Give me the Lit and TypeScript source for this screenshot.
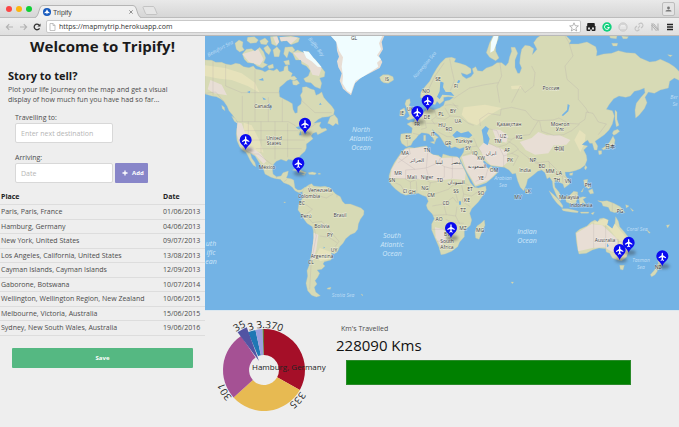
import { LitElement, html, svg, css } from "lit";
import { customElement, state } from "lit/decorators.js";

@customElement("browser-bar")
class BrowserBar extends LitElement {
  static styles = css`
    :host { display: block; font-family: "Liberation Sans", sans-serif; color: #444; }
    .tabs { display: flex; align-items: flex-end; height: 18px; background: linear-gradient(#e9e9e9, #d6d6d6); padding: 0 4px 0 6px; box-sizing: border-box; border-bottom: 1px solid #bcbcbc; }
    .lights { display: flex; gap: 4px; align-self: center; margin-right: 3px; }
    .lights button { width: 6px; height: 6px; border: 0; padding: 0; border-radius: 50%; }
    .red { background: #fb4646; } .amber { background: #fdb50f; } .green { background: #0fcf35; }
    .tabshape { display: block; height: 13px; width: 8px; margin-bottom: -1px; }
    .tab { display: flex; align-items: center; height: 13px; width: 90px; background: #f0f0f0; border-top: 1px solid #b5b5b5; box-sizing: border-box; margin-bottom: -1px; font-size: 7px; gap: 2px; }
    .tab span { flex: 1; }
    .tab button { border: 0; background: none; padding: 0; display: flex; }
    .newtab { display: flex; border: 0; background: none; padding: 0; align-self: center; margin: 4px 0 0 1px; }
    .user { display: flex; align-self: center; margin-left: auto; border: 1px solid #bdbdbd; border-radius: 2px; background: #e4e4e4; padding: 2px; }
    .tools { display: flex; align-items: center; height: 18px; box-sizing: border-box; background: linear-gradient(#efefef, #dfdfdf); border-bottom: 1px solid #b9b9b9; padding: 0 5px; gap: 5px; }
    .tools button { border: 0; padding: 0; background: none; display: flex; }
    .address { flex: 1; display: flex; align-items: center; height: 13px; box-sizing: border-box; border: 1px solid #c9c9c9; border-radius: 2px; background: #fff; padding: 0 1px 0 2px; gap: 3px; }
    .address input { flex: 1; min-width: 0; border: 0; outline: 0; padding: 0; font: 7px "Open Sans", sans-serif; color: #333; background: none; }
    .ext { display: flex; gap: 6px; }
    svg { display: block; }
  `;
  render() {
    return html`
      <div class="tabs">
        <div class="lights"><button class="red" aria-label="Close window"></button><button class="amber" aria-label="Minimise"></button><button class="green" aria-label="Zoom"></button></div>
        <svg class="tabshape" viewBox="0 0 8 13"><path d="M0 13 Q2 12 3 9 L5 3 Q6 .5 8 .5 V13Z" fill="#f0f0f0"/><path d="M0 12.5 Q2 12 3 9 L5 3 Q6 .5 8 .5" fill="none" stroke="#b5b5b5"/></svg>
        <div class="tab">
          <svg width="8" height="8" viewBox="0 0 24 24"><circle cx="12" cy="12" r="12" fill="#1559bd"/><path d="M12 4l3 6 5 4v2l-6-1-2 5-2-5-6 1v-2l5-4z" fill="#fff"/></svg>
          <span>Tripify</span>
          <button aria-label="Close tab"><svg width="4" height="4" viewBox="0 0 4 4"><path d="M.3.3l3.4 3.4M3.7.3L.3 3.7" stroke="#777" stroke-width=".8"/></svg></button>
        </div>
        <svg class="tabshape" viewBox="0 0 8 13"><path d="M8 13 Q6 12 5 9 L3 3 Q2 .5 0 .5 V13Z" fill="#f0f0f0"/><path d="M8 12.5 Q6 12 5 9 L3 3 Q2 .5 0 .5" fill="none" stroke="#b5b5b5"/></svg>
        <button class="newtab" aria-label="New tab"><svg width="16" height="9" viewBox="0 0 16 9"><path d="M2 .5h9q1 0 1.500 1l2.500 6q0 1-1 1H5q-1 0-1.500-1L1 1.500Q1 .5 2 .5z" fill="#e6e6e6" stroke="#bbb" stroke-width=".8"/></svg></button>
        <button class="user" aria-label="Profile"><svg width="7" height="8" viewBox="0 0 7 8"><circle cx="3.500" cy="3" r="1.400" fill="#777"/><path d="M.5 6.500q0-1.800 3-1.800t3 1.800z" fill="#777"/></svg></button>
      </div>
      <div class="tools">
        <button aria-label="Back"><svg width="9" height="8" viewBox="0 0 9 8"><path d="M8 4H1.500M4.200 1.200L1.400 4l2.800 2.800" fill="none" stroke="#b3b3b3" stroke-width="1.200"/></svg></button>
        <button aria-label="Forward"><svg width="9" height="8" viewBox="0 0 9 8"><path d="M1 4h6.500M4.800 1.200L7.600 4 4.800 6.800" fill="none" stroke="#b3b3b3" stroke-width="1.200"/></svg></button>
        <button aria-label="Reload"><svg width="8" height="8" viewBox="0 0 8 8"><path d="M6.500 5.200A2.800 2.800 0 1 1 6 2" fill="none" stroke="#333" stroke-width="1.300"/><path d="M7.500.5v3.100H4.400z" fill="#333"/></svg></button>
        <div class="address">
          <svg width="7" height="8" viewBox="0 0 7 8"><path d="M1 .5h3.200L6 2.400v5.100H1zM4 .5v2h2" fill="none" stroke="#aaa" stroke-width=".7"/></svg>
          <input aria-label="Address" value="https://mapmytrip.herokuapp.com" />
          <button aria-label="Bookmark"><svg width="10" height="10" viewBox="0 0 10 10"><path d="M5 .8l1.200 2.900 3.200.2-2.500 2 .8 3.100L5 7.300 2.300 9l.8-3.100-2.500-2 3.200-.2z" fill="none" stroke="#999" stroke-width=".7"/></svg></button>
        </div>
        <div class="ext">
          <button aria-label="Extension"><svg width="10" height="10" viewBox="0 0 10 10"><path d="M2 1h6q.8 0 .8 1v2.500H1.200V2q0-1 .8-1zM.5 4h9v4q0 1-1 1H5.800V7.500H4.200V9H1.500q-1 0-1-1z" fill="#222"/><rect x="2" y="5.500" width="2" height="2" fill="#ddd"/><rect x="6" y="5.500" width="2" height="2" fill="#ddd"/></svg></button>
          <button aria-label="Grammar"><svg width="10" height="10" viewBox="0 0 10 10"><circle cx="5" cy="5" r="4.700" fill="#12d17e"/><path d="M7 3.400A2.500 2.500 0 1 0 7.400 5.500H5.400" fill="none" stroke="#fff"/></svg></button>
          <button aria-label="Mail"><svg width="10" height="10" viewBox="0 0 10 10"><circle cx="5" cy="5" r="4.300" fill="#d5d5d5" stroke="#c4c4c4" stroke-width=".6"/><path d="M3 7V3.800h4V7M5 3.800V7" fill="none" stroke="#f5f5f5"/></svg></button>
          <button aria-label="Link"><svg width="10" height="10" viewBox="0 0 10 10"><path d="M4.500 2.500Q7 0 8.500 2T7 6M5.500 7.500Q3 10 1.500 8T3 4M4 6.500l2-3" fill="none" stroke="#c3c3c3" stroke-width="1.100"/></svg></button>
          <button aria-label="Network"><svg width="10" height="10" viewBox="0 0 10 10"><path d="M2 8.500v-7l6 7v-7M3.500 1.500l5 6M1.500 3l5 6" fill="none" stroke="#aaa" stroke-width=".9"/></svg></button>
          <button aria-label="Menu"><svg width="8" height="10" viewBox="0 0 8 10"><path d="M1 2.500h6M1 5h6M1 7.500h6" stroke="#222" stroke-width="1.300"/></svg></button>
        </div>
      </div>`;
  }
}

// Outlines are drawn on a grid three times finer than the label grid.
const LAND = [
  // North and Central America
  "M0 72L20 73 32 79 50 79 62 84 78 87 92 82 104 84 116 92 132 95 145 90 152 99 170 103 180 108 192 101 206 104 216 98 224 108 236 104 238 92 248 88 250 104 262 112 258 122 268 120 276 128 266 134 256 130 246 134 236 144 224 154 222 166 224 182 238 190 250 196 262 203 264 220 270 232 277 230 278 212 288 204 290 190 286 178 292 168 292 154 304 152 316 158 328 162 333 178 342 174 350 168 356 184 366 196 380 210 388 222 386 236 370 242 352 244 340 250 326 262 336 260 348 258 343 270 350 278 362 277 366 282 350 290 338 296 334 288 324 292 318 300 324 308 312 318 304 324 304 336 300 346 288 356 282 364 284 378 288 392 283 398 276 390 272 376 262 372 250 370 244 376 228 370 214 376 206 384 202 398 204 414 214 422 228 420 234 410 250 405 248 416 244 426 258 428 266 432 268 444 270 456 278 462 288 462 300 454 308 462 296 466 282 470 270 464 262 454 252 446 236 440 226 430 212 428 198 424 180 414 176 402 170 392 160 376 150 360 136 352 140 366 150 380 153 392 145 388 136 374 128 358 122 348 112 342 104 332 96 314 94 294 96 274 98 258 90 248 82 236 72 224 66 210 56 196 46 188 34 182 20 180 8 176 0 174Z",
  // Arctic archipelago
  "M90 22L102 12 114 18 112 32 118 42 104 48 94 40ZM112 54L124 40 140 38 150 46 164 34 176 48 182 66 176 80 188 86 172 96 156 90 146 82 128 80 118 70ZM128 4L148 2 160 12 154 20 136 22 126 14ZM164 14L180 6 190 16 184 26 168 24ZM176 36L188 28 198 42 192 56 182 48ZM196 2L216 0 222 18 214 30 200 24ZM204 42L216 32 226 44 222 62 208 62ZM224 4L258 0 284 6 280 18 258 26 246 14 228 16ZM240 34L262 32 270 42 262 52 252 46 246 66 236 54ZM262 50L278 42 296 50 310 46 318 62 330 70 344 88 360 108 358 122 344 126 350 142 346 158 330 152 318 140 302 138 296 128 310 120 316 104 304 90 290 84 288 72 272 72ZM262 136L276 132 284 142 274 148 264 146ZM236 76L252 72 254 86 242 86ZM188 90L204 84 206 96 192 98Z",
  "M50 208L58 214 60 224 52 218ZM80 240L92 248 98 262 88 256ZM376 242L388 236 398 248 400 266 392 262 384 270 374 264 368 262Z",
  // Caribbean
  "M262 402L276 397 290 404 304 410 300 413 286 408 272 404ZM310 410L322 408 334 411 330 416 312 415ZM290 415L300 415 298 418ZM340 412L346 412 346 415 340 415Z",
  // South America
  "M298 456L312 446 320 443 326 450 346 452 360 451 376 456 384 466 392 474 406 482 412 496 420 504 436 504 452 510 468 516 477 524 476 536 466 550 460 564 458 580 450 590 436 596 422 608 414 622 404 632 398 646 388 654 378 650 382 662 378 672 358 677 354 684 360 690 350 700 336 702 344 712 338 724 330 734 336 744 328 754 332 768 346 779 334 783 320 778 308 764 303 742 308 720 306 704 314 684 318 660 322 638 326 606 325 584 322 572 306 562 296 548 288 534 279 522 281 506 288 494 294 484 292 468Z",
  "M368 756L378 754 376 760 366 759ZM468 774L474 777 472 779Z",
  // Europe and Asia
  "M646 184L648 168 660 152 674 136 684 116 696 96 706 82 722 66 740 64 752 68 748 78 764 82 782 88 798 98 798 110 786 116 768 110 772 120 784 128 798 122 806 112 802 98 812 92 818 104 832 106 844 96 862 90 876 80 890 80 902 90 910 80 914 62 920 46 918 34 930 34 938 52 930 72 930 94 938 112 944 112 950 96 944 82 946 60 950 40 960 28 974 30 986 38 982 56 996 40 986 20 996 6 1010 -4 1080 -4 1098 14 1092 24 1120 24 1146 18 1172 32 1176 46 1174 60 1196 54 1220 52 1240 44 1264 50 1290 52 1306 66 1334 78 1352 76 1366 70 1392 82 1408 92 1426 110 1424 134 1408 126 1394 136 1390 156 1366 162 1348 172 1330 168 1320 184 1326 200 1318 218 1302 238 1292 246 1290 222 1294 202 1308 184 1320 170 1318 156 1304 162 1288 166 1276 180 1262 184 1242 180 1226 188 1212 206 1204 220 1222 224 1228 240 1222 264 1212 282 1198 296 1184 306 1170 316 1178 330 1176 342 1168 342 1162 322 1154 322 1148 312 1136 320 1130 326 1148 330 1136 342 1144 358 1146 372 1140 388 1126 398 1110 404 1094 408 1080 408 1082 420 1092 432 1094 444 1078 456 1074 444 1062 438 1054 432 1048 440 1050 454 1062 468 1070 486 1066 494 1056 482 1050 468 1044 454 1042 436 1034 424 1026 428 1020 410 1010 402 998 406 984 418 968 430 964 446 956 464 946 454 938 434 932 412 922 414 912 402 898 394 878 392 860 390 846 382 836 372 834 378 844 392 850 398 858 390 866 400 878 410 864 424 844 440 818 450 810 452 800 434 788 414 774 388 764 366 770 358 776 348 778 334 764 338 750 332 738 336 732 322 730 334 720 326 710 310 702 298 690 288 682 280 686 294 700 304 694 308 690 318 684 306 672 294 664 292 650 290 640 298 634 306 624 316 618 328 604 332 590 322 586 310 588 294 604 292 620 292 622 276 606 264 618 258 628 258 630 250 646 240 656 228 664 222 660 208 668 202 674 218 686 222 704 216 716 208 720 196 734 192 746 184 730 182 716 184 716 194 704 204 696 196 690 206 684 204 678 190 668 180 656 190Z",
  // Islands of the Atlantic
  "M524 124L534 116 550 116 564 122 566 132 550 142 536 140 528 134ZM604 192L614 188 616 200 612 208 624 222 634 238 630 246 610 252 604 248 614 240 610 230 606 218 600 204ZM586 222L598 216 602 230 596 240 584 240ZM676 318L690 316 688 324ZM656 298L662 298 662 314 656 314Z",
  "M844 50L854 20 864 0 880 0 880 8 872 28 872 46 882 66 872 74 854 64Z",
  "M1214 0L1236 0 1234 8 1216 6ZM1220 22L1238 22 1236 30 1224 30ZM1250 0L1270 2 1266 8 1254 8ZM1388 56L1402 58 1396 62ZM1230 222L1236 228 1236 250 1242 268 1234 272 1230 250ZM1226 284L1238 280 1244 286 1234 294 1226 298 1222 292ZM1224 300L1230 312 1228 326 1212 334 1196 342 1190 338 1206 328 1214 318ZM1180 344L1190 344 1190 354 1182 356ZM1142 388L1146 394 1142 402 1138 396ZM1094 412L1104 410 1102 418 1094 418Z",
  // Africa
  "M600 338L612 334 628 336 648 332 666 330 670 346 684 356 700 358 710 366 714 354 734 360 756 362 764 368 766 378 778 400 786 418 796 440 808 454 820 456 842 450 844 462 834 478 820 498 800 518 794 532 800 552 796 568 778 584 778 602 764 618 758 632 740 646 720 654 708 656 702 634 690 606 680 582 680 564 688 548 682 534 668 520 664 508 670 496 664 482 652 478 640 472 620 474 602 478 588 472 572 460 560 448 554 438 552 420 558 400 568 380 580 362 588 350Z",
  "M838 552L840 568 830 590 822 610 812 606 810 588 816 570 828 562Z",
  // South-east Asia and Oceania
  "M1032 464L1046 476 1062 492 1074 510 1072 516 1056 502 1044 486ZM1070 518L1088 518 1106 522 1120 526 1118 530 1096 528 1074 524ZM1080 482L1092 480 1106 466 1118 468 1118 484 1112 502 1098 504 1084 498ZM1122 486L1134 482 1144 484 1134 490 1142 504 1132 500 1130 510 1124 502ZM1178 494L1192 496 1206 494 1226 502 1246 512 1260 530 1244 524 1230 530 1216 526 1210 514 1194 510 1190 500ZM1136 432L1148 430 1146 446 1156 454 1150 458 1138 448ZM1150 464L1162 458 1166 472 1156 474ZM1136 456L1128 468 1132 468ZM1126 528L1152 528 1150 532 1128 532ZM1158 532L1168 528 1164 536ZM1262 506L1272 510 1264 516ZM1276 516L1286 524 1282 526ZM960 458L970 462 970 474 962 470Z",
  "M1112 590L1124 580 1146 570 1158 558 1170 552 1178 558 1184 548 1196 546 1210 552 1206 566 1222 578 1230 562 1232 542 1240 556 1244 572 1258 588 1270 604 1276 622 1270 646 1264 664 1250 674 1238 672 1222 666 1214 652 1204 648 1202 638 1182 636 1162 642 1144 652 1122 654 1118 640 1114 614ZM1244 688L1258 688 1254 702 1246 700ZM1356 662L1366 672 1378 680 1370 690 1360 702 1352 696 1360 682ZM1352 698L1358 704 1350 716 1340 722 1336 716ZM1384 568L1394 566 1388 576ZM1324 580L1336 590 1332 592ZM918 738L926 738 922 743ZM236 498L242 498 239 501Z",
];

const ARID = [
  "M90 258L110 262 124 300 136 332 166 352 184 376 176 384 150 356 128 346 104 324 96 296Z",
  "M600 340L664 332 672 350 712 366 760 364 782 412 780 432 740 428 700 434 640 430 556 426 560 400 580 366Z",
  "M770 362L804 354 836 376 850 398 874 410 852 432 812 448 784 402Z",
  "M836 320L860 326 884 336 906 346 906 380 892 392 856 386 836 362 822 336Z",
  "M944 318L980 306 1000 288 1026 298 1064 298 1096 312 1084 326 1046 328 1030 352 990 356 962 342Z",
  "M862 280L886 282 910 300 904 320 874 312Z",
  "M1114 592L1160 564 1192 568 1214 588 1236 608 1240 640 1222 648 1198 634 1162 636 1120 646Z",
  "M326 590L340 596 334 640 322 680 320 636Z",
  "M690 574L716 580 724 610 708 632 692 604Z",
  "M264 50L310 48 350 96 342 120 322 116 310 88 284 72ZM112 54L160 40 176 70 164 88 132 78ZM204 2L280 4 258 24 214 26ZM16 132L50 146 66 178 28 172 8 160Z",
];

const FERTILE = [
  "M0 88L60 96 110 112 150 140 164 170 128 150 80 132 44 128 0 120Z",
  "M776 214L840 206 890 216 850 240 816 268 790 258 770 236Z",
  "M344 636L378 648 376 668 346 676 332 660Z",
  "M1158 562L1200 548 1232 566 1270 612 1268 660 1240 672 1242 616 1206 570Z",
  "M116 260L140 268 162 310 176 350 146 344 118 312Z",
  "M918 150L950 148 948 158 920 160ZM1126 348L1108 312 1124 282 1142 296 1138 324Z",
];

const WATER = [
  "M742 298L756 284 768 292 790 286 802 298 792 306 766 302 750 306ZM830 282L842 270 852 278 846 292 854 308 848 328 836 320 834 302ZM706 136L716 140 714 154 722 168 738 168 748 180 732 178 712 176 704 190 696 182 704 166ZM1088 204L1094 208 1090 226 1074 240 1070 238 1086 222ZM762 496L768 496 768 506 762 506Z",
  "M272 274L286 270 292 280 280 280ZM286 284L290 298 282 298ZM296 286L308 290 300 296ZM126 168L136 164 134 172ZM160 132L174 126 176 134ZM194 202L200 216 196 222 190 208ZM172 184L184 190 176 192ZM346 200L350 206 342 206ZM356 632L360 634 356 638ZM1206 622L1212 630 1206 634ZM760 132L766 134 762 142 756 140Z",
];

const BORDERS =
  "M24 76V178M0 172L32 168 60 200M98 257H250L270 268 290 290 320 272 334 262M112 180V257M150 100V257M190 184V257M232 190V257M62 86V150L110 170H222M124 346L144 354H160L188 376 204 388M130 257V310M168 257V350M210 257V370M248 262V364M118 284H280M126 312H300M152 338H290M292 270L320 300M286 190L330 230H380M212 428L222 416M236 438L246 430M312 448L318 466 336 474 340 490M286 500L306 508 322 520 302 536 322 560M336 478L364 486 384 474M322 560L350 556 376 586 388 600 402 616 390 632M326 572L334 600 326 640 318 690 314 760M344 600L372 604 396 620M384 640L398 646M396 474V484M656 190L668 166 690 120 718 80M690 120L708 138M734 68L740 100 748 134 736 164M624 292L642 296M608 332L606 300M648 240L660 256 664 276 648 280M688 222L694 242 680 252 690 266M664 262H704M694 246L720 250 736 240M700 268L720 276 736 292M700 288L726 302 740 302M720 208L736 206 760 210M720 216L734 240 764 242 790 262 806 268M742 200L760 220M746 188L760 178 794 156 840 146 880 140M884 76L890 120 876 150 884 200M920 200L946 150 960 170 986 150 990 110 980 90M1080 0L1092 20 1104 60 1080 90 1086 130 1120 160 1120 190 1142 216 1150 230M824 250L850 232 886 238 888 220 920 214 962 224 984 250 1000 254M824 250L826 270M850 278L876 284 884 304 920 310 940 300 974 296 1000 254 1044 252 1062 246 1090 262 1120 264 1140 250 1144 228 1164 232 1180 258 1204 264 1180 296M1004 256L1010 286 1046 298 1076 296 1100 284 1124 264M850 320L876 334 904 326 920 312M910 316L932 330 940 340M884 336L896 360 920 352 940 340M896 360V392M920 352L940 360 924 390M940 342L970 366 1000 380 1030 376 1050 396M970 366L976 374 1000 384M1000 380L1008 402M1032 376L1036 410M1050 396L1064 410 1086 428M1040 404L1052 414 1072 420 1074 440M780 336L816 330 830 350M796 332L800 350 824 366M806 306L816 330M774 358L800 350M812 436L842 424 848 400M592 350L576 366M612 336L616 354 580 380M580 366L630 400 664 396 668 350M630 400L602 402V428H560M664 396L700 380 706 366M700 380L718 392 742 398V362M742 398H778M742 398V426M718 392L718 424M664 398L670 420 662 430M600 428L616 438 640 428M570 440L588 448 600 472M616 438L618 474M634 436L636 472M660 430L676 440 670 470M676 440L700 436 716 424M740 428L744 448 730 460 700 470 670 480M744 448L776 440 792 448M770 448L776 474 800 480 820 466M752 472L760 500M776 474L772 496 796 512M682 510L716 504 744 484 756 500M716 504L724 536 684 538M724 536L752 540 756 512M752 540L764 564M682 580H720L744 560 776 562M720 580L730 600 756 590M696 616L724 614 748 596M722 550L744 560M1166 560V636M1202 568V640M1202 610H1240V640M1240 616L1270 620M1222 648L1260 660M1222 500V526M1082 482L1102 486 1116 470";

const COUNTRIES: [string, number, number][] = [
  ["GL", 149, 4], ["IS", 182, 45], ["Canada", 58, 72], ["United", 69, 104], ["States", 69, 109], ["México", 62, 133],
  ["SE", 233, 45], ["NO", 221, 57], ["DE", 222, 83], ["PL", 236, 80], ["ES", 203, 103], ["FR", 212, 90], ["UK", 205, 75], ["IE", 197, 79], ["IT", 228, 100],
  ["HU", 237, 91], ["MA", 200, 119], ["TN", 222, 116], ["الجزائر", 212, 126], ["ليبيا", 234, 128], ["FI", 251, 52], ["BY", 248, 77],
  ["UA", 253, 87], ["RO", 244, 95], ["GR", 243, 109], ["Türkiye", 259, 107], ["SY", 263, 114], ["IQ", 270, 119], ["KW", 276, 124], ["ایران", 286, 119],
  ["مصر", 251, 128], ["السعودية", 272, 132], ["OM", 289, 136], ["AF", 302, 116], ["PK", 305, 126], ["UZ", 298, 102], ["TM", 293, 107], ["KG", 314, 103],
  ["Россия", 346, 54], ["Қазақстан", 304, 90], ["Монгол", 355, 90], ["Улс", 355, 95], ["中国", 354, 114], ["日本", 405, 112], ["NP", 328, 126], ["BD", 337, 132],
  ["India", 320, 136], ["MM", 345, 137], ["LA", 354, 139], ["TH", 352, 146], ["VN", 363, 147], ["PH", 383, 151], ["LK", 323, 157], ["MV", 313, 163],
  ["Malaysia", 364, 163], ["Indonesia", 376, 171], ["PG", 415, 177], ["Australia", 400, 206], ["NZ", 453, 233],
  ["MR", 193, 139], ["Mali", 207, 143], ["Niger", 222, 143], ["TD", 235, 146], ["SN", 187, 146], ["CI", 200, 157], ["GH", 207, 158], ["NG", 220, 154], ["CM", 226, 161],
  ["السودان", 251, 148], ["SS", 251, 157], ["ET", 265, 155], ["YE", 276, 144], ["SO", 276, 159], ["KE", 262, 166], ["CD", 241, 169], ["TZ", 258, 176], ["AO", 234, 185],
  ["MZ", 258, 194], ["MG", 275, 196], ["BW", 243, 200], ["South", 242, 207], ["Africa", 242, 213],
  ["Venezuela", 115, 156], ["Colombia", 104, 162], ["EC", 97, 169], ["Perú", 101, 182], ["Brasil", 135, 181], ["Bolivia", 117, 192], ["PY", 125, 201], ["UY", 129, 216], ["Argentina", 117, 222], ["CL", 106, 228],
];
const OCEANS: [string, number, number][] = [
  ["North", 156, 96], ["Atlantic", 156, 105], ["Ocean", 156, 114],
  ["South", 187, 202], ["Atlantic", 187, 211], ["Ocean", 187, 220],
  ["Indian", 322, 198], ["Ocean", 322, 207], ["uth", 6, 210], ["ific", 6, 219], ["ean", 6, 228],
];
const SEAS: [string, number, number, number][] = [
  ["Beaufort Sea", 16, 14, -28], ["Baffin Bay", 110, 12, 52], ["Norwegian Sea", 221, 30, -50], ["Scotia Sea", 138, 261, 0],
  ["Arabian", 298, 144, 0], ["Sea", 298, 151, 0], ["Coral Sea", 432, 195, 0], ["Tasman", 436, 226, 0], ["Sea", 436, 233, 0], ["Ber", 469, 63, 0], ["Se", 470, 70, 0],
];
const PINS: [number, number, string][] = [
  [668, 224, "Hamburg"], [637, 258, "Paris"], [300, 293, "New York"], [122, 342, "Los Angeles"], [280, 412, "Cayman Islands"],
  [738, 606, "Gaborone"], [1271, 650, "Sydney"], [1244, 672, "Melbourne"], [1372, 691, "Wellington"],
];

@customElement("trip-map")
class TripMap extends LitElement {
  static styles = css`
    :host { display: block; border-bottom: 1px solid #dce8f0; }
    .map { display: block; width: 100%; height: auto; background: #73b3e5; font-family: "Open Sans", "Noto Sans", "DejaVu Sans", "Noto Sans CJK SC", sans-serif; }
    .land { fill: #d7dab5; stroke: #c3c9ad; stroke-width: 1; }
    .ice { fill: #f0fdff; }
    .arid { fill: #e8ded5; }
    .fertile { fill: #e6e2bb; }
    .water { fill: #73b3e5; }
    .borders { fill: none; stroke: #b3a8ac; stroke-width: 1; stroke-opacity: 0.8; }
    .country { font-size: 5px; fill: #3c3c42; text-anchor: middle; stroke: #fff; stroke-width: 1; stroke-opacity: 0.5; paint-order: stroke; }
    .ocean { font-size: 7px; font-style: italic; fill: #cfe7f9; text-anchor: middle; }
    .sea { font-size: 5px; font-style: italic; fill: #c0dff6; text-anchor: middle; }
    .shadow { fill: #333; fill-opacity: 0.4; filter: blur(4px); }
    .pin { fill: #0a0af0; }
    .plane { fill: #fff; }
  `;
  render() {
    return html`<svg class="map" viewBox="0 0 474 274" role="img" aria-label="Map of visited places">
      <defs><clipPath id="coast">${LAND.map((d) => svg`<path d=${d} />`)}</clipPath></defs>
      <g transform="scale(0.333333)">
        ${LAND.map((d) => svg`<path class="land" d=${d} />`)}
        <g clip-path="url(#coast)">
          ${FERTILE.map((d) => svg`<path class="fertile" d=${d} />`)}
          ${ARID.map((d) => svg`<path class="arid" d=${d} />`)}
          <path class="borders" d=${BORDERS} />
        </g>
        ${WATER.map((d) => svg`<path class="water" d=${d} />`)}
        <path class="arid" d="M378 0L394 18 396 44 402 62 396 76 400 94 410 112 404 134 414 158 428 170 438 178 444 160 450 142 470 124 494 112 524 96 532 78 522 60 534 40 530 18 538 0Z" />
        <path class="ice" d="M378 0L394 18 402 44 414 64 410 92 414 120 412 142 426 164 438 172 444 152 452 134 474 122 500 106 520 92 516 80 528 70 516 58 528 40 522 22 532 0Z" />
        <path class="ice" d="M858 18L866 0 880 0 874 24 866 44 856 50ZM294 44L312 48 326 66 342 84 350 94 338 92 320 76 304 66Z" />
      </g>
      ${COUNTRIES.map(([t, x, y]) => svg`<text class="country" x=${x} y=${y}>${t}</text>`)}
      ${OCEANS.map(([t, x, y]) => svg`<text class="ocean" x=${x} y=${y}>${t}</text>`)}
      ${SEAS.map(([t, x, y, a]) => svg`<text class="sea" x=${x} y=${y} transform="rotate(${a} ${x} ${y})">${t}</text>`)}
      <g transform="scale(0.333333)">
        ${PINS.map(([x, y, name]) => svg`<g transform="translate(${x} ${y})"><title>${name}</title>
          <ellipse class="shadow" cx="4" cy="0" rx="18" ry="8" />
          <path class="pin" d="M0 0C-4 -13 -18 -17 -18 -30A18 18 0 0 1 18 -30C18 -17 4 -13 0 0Z" />
          <path class="plane" d="M0 -41Q2 -41 2 -37V-33L11 -27V-24L2 -27V-21L5 -18V-16L0 -18 -5 -16V-18L-2 -21V-27L-11 -24V-27L-2 -33V-37Q-2 -41 0 -41Z" /></g>`)}
      </g>
    </svg>`;
  }
}

const polar = (r: number, deg: number) => {
  const a = (deg * Math.PI) / 180;
  return `${(Math.sin(a) * r).toFixed(2)} ${(-Math.cos(a) * r).toFixed(2)}`;
};

interface Slice { from: number; to: number; color: string; value: string; }

@customElement("distance-donut")
class DistanceDonut extends LitElement {
  static styles = css`
    :host { display: block; }
    .donut { display: block; width: 118px; height: 104px; overflow: visible; font-family: "Open Sans", sans-serif; }
    .value { font-size: 10px; fill: #222; }
    .place { font-size: 8px; fill: #222; }
  `;
  slices: Slice[] = [
    { from: 0, to: 119, color: "#a50f28", value: "370" },
    { from: 119, to: 228, color: "#e7ba52", value: "335" },
    { from: 228, to: 326, color: "#a55194", value: "301" },
    { from: 337, to: 348, color: "#1f77b4", value: "3" },
    { from: 348, to: 358, color: "#9c9ede", value: "3." },
    { from: 358, to: 360, color: "#637939", value: "" },
  ];
  offset(radius: number, deg: number) { return Math.round((deg * Math.PI * radius) / 180); }
  render() {
    return html`<svg class="donut" viewBox="-46 -50 118 104" role="img" aria-label="Distance by place">
      <defs>
        <path id="rim" d="M0 -42A42 42 0 0 1 0 42A42 42 0 0 1 0 -42" />
        <path id="raised" d="M0 -47A47 47 0 0 1 0 47A47 47 0 0 1 0 -47" />
      </defs>
      ${this.slices.map((s) => svg`<path fill=${s.color} d="M${polar(15, s.from)}L${polar(41, s.from)}A41 41 0 0 1 ${polar(41, s.to)}L${polar(15, s.to)}A15 15 0 0 0 ${polar(15, s.from)}Z" />`)}
      <path fill="#5254a3" d="M-5 -9L${polar(46, 325)}A46 46 0 0 1 ${polar(46, 338)}Z" />
      ${this.slices.filter((s) => s.value).map((s) => svg`<text class="value"><textPath href="#rim" startOffset=${this.offset(42, s.from + 1)}>${s.value}</textPath></text>`)}
      <text class="value"><textPath href="#raised" startOffset=${this.offset(47, 323)}>35</textPath></text>
      <text class="place" x="-12" y="0">Hamburg, Germany</text>
    </svg>`;
  }
}

@customElement("app-root")
class AppRoot extends LitElement {
  static styles = css`
    :host { display: block; min-height: 100vh; background: #eee; font-family: "Open Sans", sans-serif; font-size: 7px; color: #4c4c4c; }
    .page { display: grid; grid-template-columns: 205px 1fr; }
    h1 { margin: 0; font-size: 15px; line-height: 20px; text-align: center; color: #1b1b1b; }
    .intro { padding: 13px 24px 0 8px; }
    h2 { margin: 0; font-size: 11px; line-height: 14px; color: #1b1b1b; }
    .intro p { margin: 2px 0 0; line-height: 10px; }
    form { display: grid; gap: 10px; padding: 8px 15px 0; }
    .field { display: grid; grid-template-columns: 98px auto; column-gap: 2px; justify-content: start; }
    label { grid-column: 1 / -1; line-height: 10px; }
    .field input { box-sizing: border-box; width: 100%; height: 20px; border: 1px solid #d8d8d8; border-radius: 2px; padding: 0 5px; font: inherit; color: #444; background: #fff; }
    .field input::placeholder { color: #b5b5b5; opacity: 1; }
    .add, .save { border: 0; border-radius: 1px; font: bold 6px "Open Sans", sans-serif; color: #fff; height: 20px; }
    .add { display: flex; align-items: center; gap: 4px; background: #8886c9; padding: 0 4px 0 7px; }
    .save { display: block; width: calc(100% - 24px); margin: 12px 12px 16px; background: #55b882; }
    table { width: 100%; border-collapse: collapse; margin-top: 7px; }
    th, td { padding: 0 0 0 1px; text-align: left; border-bottom: 1px solid #ddd; line-height: 13px; }
    th { color: #222; line-height: 14px; }
    .row:nth-child(odd) td { line-height: 14px; }
    .when { width: 42px; }
    .stats { display: grid; grid-template-columns: 131px 1fr; padding: 9px 48px 0 0; }
    distance-donut { margin-left: 13px; }
    .label { margin: 4px 0 0 5px; line-height: 10px; }
    .total { margin: 0; font-size: 15px; line-height: 22px; color: #111; }
    .bar { height: 25px; margin: 4px 0 0 10px; background: #008000; border: 1px solid #2a8a2a; box-sizing: border-box; }
  `;
  @state() trips = [
    ["Paris, Paris, France", "01/06/2013"], ["Hamburg, Germany", "04/06/2013"], ["New York, United States", "09/07/2013"],
    ["Los Angeles, California, United States", "13/08/2013"], ["Cayman Islands, Cayman Islands", "12/09/2013"], ["Gaborone, Botswana", "10/07/2014"],
    ["Wellington, Wellington Region, New Zealand", "10/06/2015"], ["Melbourne, Victoria, Australia", "15/06/2015"], ["Sydney, New South Wales, Australia", "19/06/2016"],
  ];
  render() {
    return html`
      <browser-bar></browser-bar>
      <main class="page">
        <section>
          <h1>Welcome to Tripify!</h1>
          <div class="intro">
            <h2>Story to tell?</h2>
            <p>Plot your life journey on the map and get a visual display of how much fun you have had so far...</p>
          </div>
          <form>
            <div class="field"><label for="place">Travelling to:</label><input id="place" placeholder="Enter next destination" /></div>
            <div class="field"><label for="date">Arriving:</label><input id="date" placeholder="Date" />
              <button class="add" type="button"><svg width="6" height="6" viewBox="0 0 6 6"><path d="M3 .5v5M.5 3h5" stroke="#fff" stroke-width="1.300" /></svg>Add</button></div>
          </form>
          <table>
            <thead><tr><th>Place</th><th class="when">Date</th></tr></thead>
            <tbody>${this.trips.map(([p, d]) => html`<tr class="row"><td>${p}</td><td class="when">${d}</td></tr>`)}</tbody>
          </table>
          <button class="save" type="button">Save</button>
        </section>
        <section>
          <trip-map></trip-map>
          <div class="stats">
            <distance-donut></distance-donut>
            <div><p class="label">Km's Travelled</p><p class="total">228090 Kms</p><div class="bar"></div></div>
          </div>
        </section>
      </main>`;
  }
}
